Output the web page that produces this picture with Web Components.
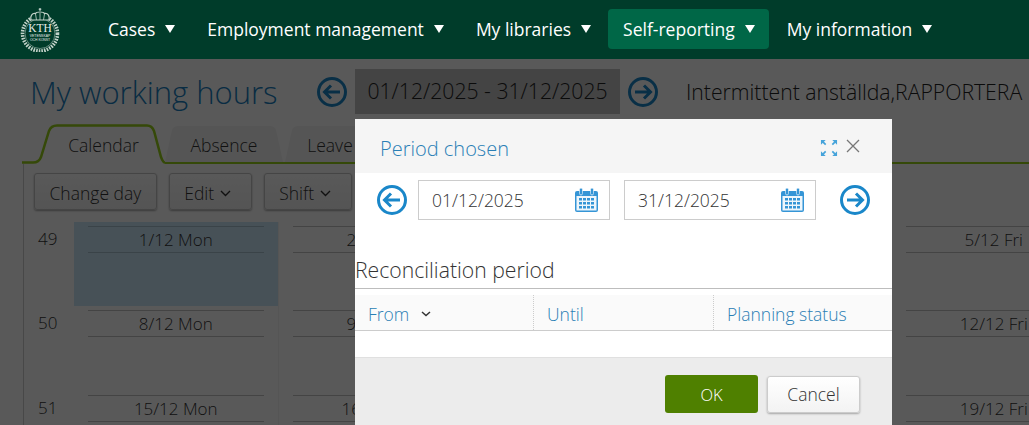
<!DOCTYPE html>
<html>
<head>
<meta charset="utf-8">
<title>My working hours</title>
<style>
html, body { margin: 0; padding: 0; height: 425px; overflow: hidden; background: #fff; }
body { font-family: "Open Sans", "Liberation Sans", sans-serif; color: #333; }
</style>
</head>
<body>
<app-shell>
  <app-nav slot="nav">
    <nav-item>Cases</nav-item>
    <nav-item>Employment management</nav-item>
    <nav-item>My libraries</nav-item>
    <nav-item active>Self-reporting</nav-item>
    <nav-item>My information</nav-item>
  </app-nav>
  <hours-page slot="page"></hours-page>
  <modal-layer slot="modal">
    <period-dialog></period-dialog>
  </modal-layer>
</app-shell>

<script>
const shellTemplate = document.createElement("template");
shellTemplate.innerHTML = `
<style>
:host { display: block; position: relative; width: 1029px; height: 425px; overflow: hidden; }
</style>
<slot name="nav"></slot>
<slot name="page"></slot>
<slot name="modal"></slot>`;
class AppShell extends HTMLElement {
  constructor() {
    super();
    this.attachShadow({ mode: "open" });
    this.shadowRoot.appendChild(shellTemplate.content.cloneNode(true));
  }
}
customElements.define("app-shell", AppShell);

const logoTemplate = document.createElement("template");
logoTemplate.innerHTML = `
<style>
:host { display: block; width: 42px; height: 44px; }
svg { display: block; }
text { fill: #e8eeea; text-anchor: middle; }
</style>
<svg width="42" height="44" viewBox="0 0 42 44">
  <g fill="none" stroke="#c3d3ca">
    <circle cx="21" cy="25.500" r="17.500" stroke-width="3.600" stroke-dasharray="1.600 1.100"/>
    <circle cx="21" cy="25.500" r="15" stroke-width=".5"/>
    <path d="M12 12c-1-4 1-7 4.500-6.500 1-2 8-2 9 0 3.500-.5 5.500 2.500 4.500 6.500z" stroke-width="1.200" fill="#003c2a"/>
    <path d="M16.500 6l1 6M21 5v7M25.500 6l-1 6" stroke-width=".8"/>
  </g>
  <path d="M21 0v3M19.700 1.200h2.600" stroke="#e8eeea" stroke-width=".9"/>
  <text x="21" y="24" font-family="Liberation Serif, serif" font-size="11.500">KTH</text>
  <text x="21" y="28.800" font-family="Liberation Sans, sans-serif" font-size="3.400">VETENSKAP</text>
  <text x="21" y="33" font-family="Liberation Sans, sans-serif" font-size="3.400">OCH KONST</text>
</svg>`;
class KthLogo extends HTMLElement {
  constructor() {
    super();
    this.attachShadow({ mode: "open" });
    this.shadowRoot.appendChild(logoTemplate.content.cloneNode(true));
  }
}
customElements.define("kth-logo", KthLogo);

const navTemplate = document.createElement("template");
navTemplate.innerHTML = `
<style>
:host { display: flex; align-items: center; height: 59px; background: #003c2a; box-sizing: border-box; padding-left: 19px; }
.items { display: flex; gap: 3px; margin: -1px 0 0 32px; }
</style>
<kth-logo></kth-logo>
<div class="items"><slot></slot></div>`;
class AppNav extends HTMLElement {
  constructor() {
    super();
    this.attachShadow({ mode: "open" });
    this.shadowRoot.appendChild(navTemplate.content.cloneNode(true));
  }
}
customElements.define("app-nav", AppNav);

const navItemTemplate = document.createElement("template");
navItemTemplate.innerHTML = `
<style>
:host { display: flex; align-items: center; gap: 10px; height: 40px; box-sizing: border-box; padding: 0 14px 0 15px; border-radius: 4px; color: #fff; font-size: 17.500px; white-space: nowrap; }
:host([active]) { background: #006747; }
i { display: block; width: 0; height: 0; border-left: 5.500px solid transparent; border-right: 5.500px solid transparent; border-top: 8px solid #fff; margin-top: -1px; }
</style>
<slot></slot><i></i>`;
class NavItem extends HTMLElement {
  constructor() {
    super();
    this.attachShadow({ mode: "open" });
    this.shadowRoot.appendChild(navItemTemplate.content.cloneNode(true));
  }
}
customElements.define("nav-item", NavItem);

const arrowTemplate = document.createElement("template");
arrowTemplate.innerHTML = `
<style>
:host { display: block; width: 30px; height: 30px; flex: none; color: #1a87c9; }
svg { display: block; }
</style>
<svg width="30" height="30" viewBox="0 0 30 30" fill="none" stroke="currentColor">
  <circle cx="15" cy="15" r="13.500" stroke-width="3"/>
  <path class="a" d="M23 15H8M14 8.500L7.500 15l6.500 6.500" stroke-width="3"/>
</svg>`;
class RoundArrow extends HTMLElement {
  constructor() {
    super();
    this.attachShadow({ mode: "open" });
    this.shadowRoot.appendChild(arrowTemplate.content.cloneNode(true));
    if (this.getAttribute("dir") === "next") {
      this.shadowRoot.querySelector(".a").setAttribute("d", "M7 15h15M16 8.500l6.500 6.500-6.500 6.500");
    }
  }
}
customElements.define("round-arrow", RoundArrow);

const tabTemplate = document.createElement("template");
tabTemplate.innerHTML = `
<style>
:host { display: block; position: relative; height: 40px; flex: none; font-size: 17.500px; font-weight: 300; color: #333; }
svg { position: absolute; left: 0; top: 0; }
span { position: absolute; left: 0; right: 0; top: 9px; text-align: center; line-height: 24px; }
:host([active]) span { left: 20px; }
</style>
<svg height="40" fill="none"></svg>
<span><slot></slot></span>`;
class TabItem extends HTMLElement {
  constructor() {
    super();
    this.attachShadow({ mode: "open" });
    this.shadowRoot.appendChild(tabTemplate.content.cloneNode(true));
  }
  connectedCallback() {
    const w = parseInt(this.getAttribute("w"));
    const svg = this.shadowRoot.querySelector("svg");
    this.style.width = w + "px";
    svg.setAttribute("width", w);
    if (this.hasAttribute("active")) {
      svg.innerHTML = `<path d="M0 39H11Q17 39 19 33L27 7Q29 1 35 1H125Q130 1 132 7L139 33Q141 39 143 39V40H0Z" fill="#fff"/>
      <path d="M0 38.500H11Q17 38.500 19 33L27 7Q29 1.500 35 1.500H125Q130 1.500 132 7L139 33Q141 38.500 143 38.500" stroke="#98d01a" stroke-width="2.500"/>`;
    } else {
      svg.innerHTML = `<path d="M0 38L7 6Q8 2 14 2H${w - 14}Q${w - 8} 2 ${w - 7} 6L${w} 38Z" fill="#f3f3f3"/>`;
    }
  }
}
customElements.define("tab-item", TabItem);

const toolTemplate = document.createElement("template");
toolTemplate.innerHTML = `
<style>
:host { display: inline-flex; align-items: center; gap: 6px; height: 37px; box-sizing: border-box; padding: 2px 14.500px 0; border: 1px solid #c6c6c6; border-radius: 3px; background: linear-gradient(#fff, #f1f1f1); box-shadow: 0 1px 2px rgba(0,0,0,.35); color: #333; font-size: 17.500px; font-weight: 300; white-space: nowrap; }
:host([menu]) { padding-right: 19.500px; }
svg { display: none; }
:host([menu]) svg { display: block; margin-top: 2px; }
</style>
<slot></slot>
<svg width="11" height="7" viewBox="0 0 11 7" fill="none" stroke="#333" stroke-width="1.400"><path d="M1 1l4.500 4.500L10 1"/></svg>`;
class ToolButton extends HTMLElement {
  constructor() {
    super();
    this.attachShadow({ mode: "open" });
    this.shadowRoot.appendChild(toolTemplate.content.cloneNode(true));
  }
}
customElements.define("tool-button", ToolButton);

const dayTemplate = document.createElement("template");
dayTemplate.innerHTML = `
<style>
:host { display: block; box-sizing: border-box; padding: 4px 14px 0; border-right: 1px solid #f4f4f4; background: #fff; }
:host([selected]) { background: #cce8fa; }
div { border-top: 1px solid #c4c4c4; border-bottom: 1px solid #c4c4c4; height: 25px; line-height: 25px; text-align: center; font-size: 17px; font-weight: 300; color: #333; white-space: nowrap; }
:host([selected]) div { border-color: #a6c0cf; }
</style>
<div><slot></slot></div>`;
class DayCell extends HTMLElement {
  constructor() {
    super();
    this.attachShadow({ mode: "open" });
    this.shadowRoot.appendChild(dayTemplate.content.cloneNode(true));
  }
}
customElements.define("day-cell", DayCell);

const calendarTemplate = document.createElement("template");
calendarTemplate.innerHTML = `
<style>
:host { display: grid; grid-template-columns: 50px repeat(5, 204.500px); grid-template-rows: 84px 85px 85px; width: 1200px; }
.week { font-size: 17px; font-weight: 300; color: #333; padding: 5px 0 0 14px; }
</style>`;
class WorkCalendar extends HTMLElement {
  constructor() {
    super();
    this.attachShadow({ mode: "open" });
    this.shadowRoot.appendChild(calendarTemplate.content.cloneNode(true));
    // Wed and Thu sit fully behind the dialog, so they carry no label here
    const names = ["Mon", "Tue", "", "", "Fri"];
    [[49, 1], [50, 8], [51, 15]].forEach(([week, first]) => {
      const w = document.createElement("div");
      w.className = "week";
      w.textContent = week;
      this.shadowRoot.appendChild(w);
      names.forEach((name, i) => {
        const d = document.createElement("day-cell");
        d.textContent = name ? `${first + i}/12 ${name}` : "";
        if (first === 1 && i === 0) d.setAttribute("selected", "");
        this.shadowRoot.appendChild(d);
      });
    });
  }
}
customElements.define("work-calendar", WorkCalendar);

const pageTemplate = document.createElement("template");
pageTemplate.innerHTML = `
<style>
:host { display: block; height: 366px; overflow: hidden; background: #fff; }
.head { display: flex; align-items: center; height: 45px; margin-top: 10px; padding-left: 30px; white-space: nowrap; }
h1 { margin: 2px 38px 0 0; width: 249px; flex: none; font-size: 31px; font-weight: 300; color: #1a7fbf; line-height: 45px; }
.range { flex: none; box-sizing: border-box; width: 265px; height: 45px; margin: 0 8px; line-height: 44px; text-align: center; background: #c2c2c2; font-size: 21.200px; font-weight: 300; color: #222; }
.name { margin: -1px 0 0 28px; font-size: 21.200px; font-weight: 300; color: #222; }
.tabs { display: flex; width: 1007px; margin: 10px 0 0 22px; position: relative; }
.tabs::after { content: ""; position: absolute; left: 143px; right: 0; bottom: 0; height: 2.500px; background: #98d01a; }
.tabs tab-item:nth-child(n+2) { margin-right: 2px; }
.panel { margin-left: 23px; border-left: 1px solid #cdcdcd; padding-top: 9px; }
.tools { display: flex; gap: 12px; padding-left: 10px; margin-bottom: 12px; }
</style>
<div class="head">
  <h1>My working hours</h1>
  <round-arrow></round-arrow>
  <div class="range">01/12/2025 - 31/12/2025</div>
  <round-arrow dir="next"></round-arrow>
  <div class="name">Intermittent anställda,RAPPORTERA</div>
</div>
<div class="tabs">
  <tab-item w="143" active>Calendar</tab-item>
  <tab-item w="118">Absence</tab-item>
  <tab-item w="90">Leave</tab-item>
</div>
<div class="panel">
  <div class="tools">
    <tool-button>Change day</tool-button>
    <tool-button menu>Edit</tool-button>
    <tool-button menu>Shift</tool-button>
  </div>
  <work-calendar></work-calendar>
</div>`;
class HoursPage extends HTMLElement {
  constructor() {
    super();
    this.attachShadow({ mode: "open" });
    this.shadowRoot.appendChild(pageTemplate.content.cloneNode(true));
  }
}
customElements.define("hours-page", HoursPage);

const modalTemplate = document.createElement("template");
modalTemplate.innerHTML = `
<style>
:host { display: block; position: absolute; left: 0; right: 0; top: 59px; bottom: 0; background: rgba(0,0,0,.65); box-sizing: border-box; padding: 60px 0 0 355px; }
</style>
<slot></slot>`;
class ModalLayer extends HTMLElement {
  constructor() {
    super();
    this.attachShadow({ mode: "open" });
    this.shadowRoot.appendChild(modalTemplate.content.cloneNode(true));
  }
}
customElements.define("modal-layer", ModalLayer);

const dateTemplate = document.createElement("template");
dateTemplate.innerHTML = `
<style>
:host { display: flex; align-items: center; justify-content: space-between; box-sizing: border-box; width: 192px; height: 40px; padding: 0 11px 0 13px; border: 1px solid #ccc; background: #fff; font-size: 17.500px; font-weight: 300; color: #333; }
svg { display: block; }
</style>
<slot></slot>
<svg width="23" height="24" viewBox="0 0 23 24">
  <path d="M2 3h19a2 2 0 0 1 2 2v17a2 2 0 0 1-2 2H2a2 2 0 0 1-2-2V5a2 2 0 0 1 2-2z" fill="#3595d6"/>
  <rect x="1.500" y="8" width="20" height="14.500" fill="#eef6fb"/>
  <rect x="4.500" y="0" width="3" height="7" rx="1.500" fill="#3595d6" stroke="#fff" stroke-width=".6"/>
  <rect x="15.500" y="0" width="3" height="7" rx="1.500" fill="#3595d6" stroke="#fff" stroke-width=".6"/>
  <path d="M4 10h3v2.500H4zM8 10h3v2.500H8zM12 10h3v2.500h-3zM16 10h3v2.500h-3zM4 14h3v2.500H4zM8 14h3v2.500H8zM12 14h3v2.500h-3zM16 14h3v2.500h-3zM4 18h3v2.500H4zM8 18h3v2.500H8zM12 18h3v2.500h-3zM16 18h3v2.500h-3z" fill="#3595d6"/>
</svg>`;
class DateField extends HTMLElement {
  constructor() {
    super();
    this.attachShadow({ mode: "open" });
    this.shadowRoot.appendChild(dateTemplate.content.cloneNode(true));
  }
}
customElements.define("date-field", DateField);

const dialogTemplate = document.createElement("template");
dialogTemplate.innerHTML = `
<style>
:host { display: block; width: 537px; height: 340px; background: #fff; }
.top { display: flex; align-items: center; height: 54px; background: #f5f5f5; padding: 4px 32px 0 25px; box-sizing: border-box; }
.top h2 { margin: 0; flex: 1; font-size: 20px; font-weight: 300; color: #2a7fb5; }
.top .icons { display: flex; align-items: flex-start; gap: 8px; }
svg { display: block; }
.range { display: flex; align-items: center; height: 40px; margin-top: 7px; padding-left: 22px; }
.range date-field { margin-left: 11px; }
.range date-field + date-field { margin-left: 14px; }
.range round-arrow:last-child { margin-left: 24px; }
h3 { margin: 38px 0 0; height: 31px; box-sizing: border-box; border-bottom: 1px solid #bdbdbd; font-size: 21.200px; line-height: 24px; font-weight: 300; color: #333; white-space: nowrap; }
.cols { display: grid; grid-template-columns: 178px 180px 1fr; height: 35px; margin-top: 6px; background: #fafafa; border-bottom: 1px solid #ccc; }
.cols div { display: flex; align-items: center; gap: 12px; padding: 3px 0 0 13px; font-size: 17.500px; font-weight: 300; color: #2a7fb5; white-space: nowrap; }
.cols div + div { border-left: 1px dotted #ccc; }
.empty { height: 26px; }
.foot { display: flex; justify-content: flex-end; gap: 9px; align-items: center; height: 68px; box-sizing: border-box; padding: 5px 32px 0 0; background: #ececec; border-top: 1px solid #e0e0e0; }
.ok, .cancel { display: flex; align-items: center; justify-content: center; width: 93px; height: 38px; box-sizing: border-box; border-radius: 3px; font-size: 17.500px; font-weight: 300; }
.ok { background: #4f8000; color: #fff; font-size: 16.500px; }
.cancel { height: 37px; background: linear-gradient(#fff, #f3f3f3); border: 1px solid #ccc; box-shadow: 0 1px 2px rgba(0,0,0,.3); color: #333; }
</style>
<div class="top">
  <h2>Period chosen</h2>
  <div class="icons">
    <svg width="18" height="18" viewBox="0 0 19 19" fill="#45a3da" stroke="#45a3da">
      <path d="M1 1h5L1 6zM18 1h-5l5 5zM1 18h5l-5-5zM18 18h-5l5-5z" stroke="none"/>
      <path d="M2 2l4 4M17 2l-4 4M2 17l4-4M17 17l-4-4" stroke-width="1.800"/>
    </svg>
    <svg width="14" height="14" viewBox="0 0 14 14" fill="none" stroke="#777" stroke-width="1.300"><path d="M1 1l12 12M13 1L1 13"/></svg>
  </div>
</div>
<div class="range">
  <round-arrow></round-arrow>
  <date-field>01/12/2025</date-field>
  <date-field>31/12/2025</date-field>
  <round-arrow dir="next"></round-arrow>
</div>
<h3>Reconciliation period</h3>
<div class="cols">
  <div>From <svg width="10" height="6" viewBox="0 0 10 6" fill="none" stroke="#333" stroke-width="1.500"><path d="M1 1l4 3.500L9 1"/></svg></div>
  <div>Until</div>
  <div>Planning status</div>
</div>
<div class="empty"></div>
<div class="foot">
  <div class="ok">OK</div>
  <div class="cancel">Cancel</div>
</div>`;
class PeriodDialog extends HTMLElement {
  constructor() {
    super();
    this.attachShadow({ mode: "open" });
    this.shadowRoot.appendChild(dialogTemplate.content.cloneNode(true));
  }
}
customElements.define("period-dialog", PeriodDialog);
</script>
</body>
</html>
